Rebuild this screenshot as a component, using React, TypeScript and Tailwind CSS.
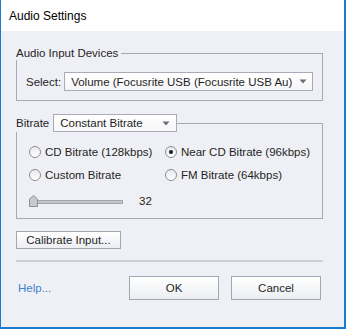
import React from 'react';

const Arrow = () => (
  <svg width="8" height="5" viewBox="0 0 8 5" className="shrink-0">
    <path d="M0.5 0.5 H7.5 L4 4.5 Z" fill="#6b6e78" />
  </svg>
);

function Radio({ checked, label }: { checked?: boolean; label: string }) {
  return (
    <div className="flex items-center h-4 gap-[4px]">
      <span className="w-[12px] h-[12px] rounded-full border border-[#8a8e99] bg-gradient-to-b from-[#e9eaee] to-white flex items-center justify-center shrink-0">
        {checked && <span className="w-[4px] h-[4px] rounded-full bg-[#1b1b1b]" />}
      </span>
      <span>{label}</span>
    </div>
  );
}

export default function App() {
  return (
    <div
      className="w-[346px] h-[329px] flex flex-col bg-[#eff0f5] border-l border-r-2 border-b-2 border-[#1b7bd3] text-[11.5px] leading-[14px] text-[#1f1f1f]"
      style={{ fontFamily: '"Liberation Sans", Arial, sans-serif' }}
    >
      {/* Title bar */}
      <div className="h-[31px] bg-white flex items-center pl-[8px] text-[12px] text-black">
        Audio Settings
      </div>

      <div className="flex flex-col pl-[15px] pr-[21px] pt-[15px]">
        {/* Audio Input Devices */}
        <div className="flex items-center h-[14px]">
          <span className="pr-[3px]">Audio Input Devices</span>
          <div className="flex-1 self-end h-[7px] border-t border-r border-[#a6a9b5]" />
        </div>
        <div className="border-l border-r border-b border-[#a6a9b5] pt-[12px] pb-[9px] pl-[9px] pr-[9px] flex items-center gap-[3px]">
          <span>Select:</span>
          <div className="flex-1 h-[19px] bg-gradient-to-b from-white to-[#f6f6f8] border border-[#a9acb7] flex items-center pl-[6px] pr-[5px]">
            <span className="flex-1 whitespace-nowrap overflow-hidden">Volume (Focusrite USB (Focusrite USB Au)</span>
            <Arrow />
          </div>
        </div>

        {/* Bitrate */}
        <div className="flex items-center h-[18px] mt-[13px]">
          <span className="pr-[4px]">Bitrate</span>
          <div className="w-[124px] h-[18px] bg-gradient-to-b from-white to-[#f6f6f8] border border-[#a9acb7] flex items-center pl-[6px] pr-[6px]">
            <span className="flex-1 whitespace-nowrap">Constant Bitrate</span>
            <Arrow />
          </div>
          <div className="flex-1 self-end h-[9px] border-t border-r border-[#a6a9b5]" />
        </div>
        <div className="border-l border-r border-b border-[#a6a9b5] pt-[12px] pb-[11px] pl-[12px] flex flex-col">
          <div className="grid grid-cols-[136px_1fr] gap-y-[7px]">
            <Radio label="CD Bitrate (128kbps)" />
            <Radio checked label="Near CD Bitrate (96kbps)" />
            <Radio label="Custom Bitrate" />
            <Radio label="FM Bitrate (64kbps)" />
          </div>
          <div className="flex items-center h-[12px] mt-[12px] gap-[16px]">
            <svg width="94" height="12" viewBox="0 0 94 12">
              <rect x="0.5" y="5.5" width="93" height="3" fill="#c6c7cc" stroke="#a4a6ad" />
              <path d="M0.5 11.5 V4 L4.5 0.5 L8.5 4 V11.5 Z" fill="#c9cacf" stroke="#8e9099" />
            </svg>
            <span>32</span>
          </div>
        </div>

        {/* Calibrate */}
        <div className="mt-[12px]">
          <button className="w-[105px] h-[18px] bg-gradient-to-b from-white to-[#eceef2] border border-[#a3a6b3] flex items-center justify-center">
            Calibrate Input...
          </button>
        </div>

        <div className="h-[2px] bg-[#cfd0d6] mt-[11px]" />

        {/* Footer */}
        <div className="flex items-center mt-[14px] pr-[2px]">
          <span className="pl-[2px] text-[#3c84cb] flex-1">Help...</span>
          <button className="w-[90px] h-[24px] bg-gradient-to-b from-white to-[#eceef2] border border-[#a3a6b3]">OK</button>
          <button className="w-[90px] h-[24px] ml-[12px] bg-gradient-to-b from-white to-[#eceef2] border border-[#a3a6b3]">Cancel</button>
        </div>
      </div>
    </div>
  );
}
